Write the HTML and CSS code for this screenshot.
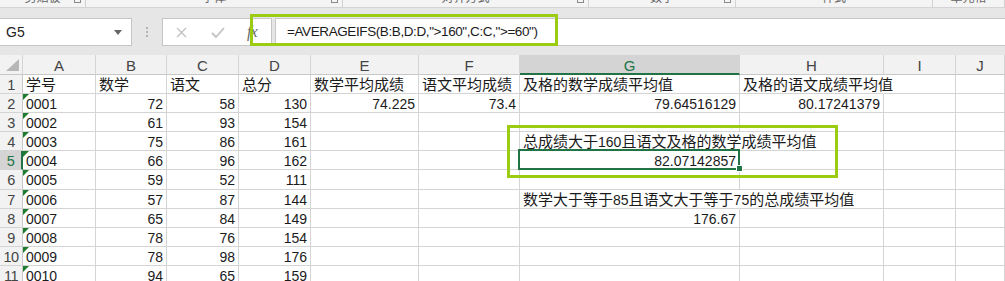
FILE: index.html
```html
<!DOCTYPE html>
<html lang="zh-CN">
<head>
  <meta charset="UTF-8" />
  <title>AVERAGEIFS</title>
  <link rel="stylesheet" href="styles.css">
</head>
<body>
<div class="app">

  <div class="ribbon-tail">
    <div class="grp"><span class="lbl">剪贴板</span><span class="launch"></span></div>
    <div class="grp"><span class="lbl">字体</span><span class="launch"></span></div>
    <div class="grp"><span class="lbl">对齐方式</span><span class="launch"></span></div>
    <div class="grp"><span class="lbl">数字</span><span class="launch"></span></div>
    <div class="grp"><span class="lbl">样式</span></div>
    <div class="grp"><span class="lbl">单元格</span></div>
  </div>

  <div class="fbar">
    <div class="namebox">
      <span>G5</span>
      <svg class="caret" width="8" height="5" viewBox="0 0 8 5"><path d="M0 0h8L4 5z" fill="#666"/></svg>
    </div>
    <svg class="grip" width="3" height="11" viewBox="0 0 3 11">
      <rect x="0" y="0" width="2" height="2" fill="#b5b5b5"/>
      <rect x="0" y="4" width="2" height="2" fill="#b5b5b5"/>
      <rect x="0" y="8" width="2" height="2" fill="#b5b5b5"/>
    </svg>
    <div class="fbtns">
      <svg class="btn-x" width="11" height="11" viewBox="0 0 11 11"><path d="M1 1l9 9M10 1l-9 9" stroke="#c2c2c2" stroke-width="1.4"/></svg>
      <svg class="btn-ok" width="14" height="11" viewBox="0 0 14 11"><path d="M1 6l4 4 8-9" stroke="#c2c2c2" stroke-width="1.8" fill="none"/></svg>
      <span class="fx">fx</span>
    </div>
    <div class="finput">=AVERAGEIFS(B:B,D:D,"&gt;160",C:C,"&gt;=60")</div>
  </div>

  <div class="sheet">
    <div class="hd corner"><svg width="13" height="12" viewBox="0 0 13 12"><path d="M13 0V12H0z" fill="#b7b7b7"/></svg></div>
    <div class="hd">A</div>
    <div class="hd">B</div>
    <div class="hd">C</div>
    <div class="hd">D</div>
    <div class="hd">E</div>
    <div class="hd">F</div>
    <div class="hd on-col">G</div>
    <div class="hd">H</div>
    <div class="hd">I</div>
    <div class="hd">J</div>

    <div class="rh">1</div>
    <div class="c">学号</div><div class="c">数学</div><div class="c">语文</div><div class="c">总分</div>
    <div class="c">数学平均成绩</div><div class="c">语文平均成绩</div><div class="c">及格的数学成绩平均值</div>
    <div class="c spill">及格的语文成绩平均值</div><div class="c"></div><div class="c"></div>

    <div class="rh">2</div>
    <div class="c t">0001</div><div class="c n">72</div><div class="c n">58</div><div class="c n">130</div>
    <div class="c n">74.225</div><div class="c n">73.4</div><div class="c n">79.64516129</div>
    <div class="c n">80.17241379</div><div class="c"></div><div class="c"></div>

    <div class="rh">3</div>
    <div class="c t">0002</div><div class="c n">61</div><div class="c n">93</div><div class="c n">154</div>
    <div class="c"></div><div class="c"></div><div class="c"></div><div class="c"></div><div class="c"></div><div class="c"></div>

    <div class="rh">4</div>
    <div class="c t">0003</div><div class="c n">75</div><div class="c n">86</div><div class="c n">161</div>
    <div class="c"></div><div class="c"></div><div class="c spill">总成绩大于<span class="d">160</span>且语文及格的数学成绩平均值</div>
    <div class="c"></div><div class="c"></div><div class="c"></div>

    <div class="rh on-row">5</div>
    <div class="c t">0004</div><div class="c n">66</div><div class="c n">96</div><div class="c n">162</div>
    <div class="c"></div><div class="c"></div><div class="c n sel">82.07142857<span class="handle"></span></div>
    <div class="c"></div><div class="c"></div><div class="c"></div>

    <div class="rh">6</div>
    <div class="c t">0005</div><div class="c n">59</div><div class="c n">52</div><div class="c n">111</div>
    <div class="c"></div><div class="c"></div><div class="c"></div><div class="c"></div><div class="c"></div><div class="c"></div>

    <div class="rh">7</div>
    <div class="c t">0006</div><div class="c n">57</div><div class="c n">87</div><div class="c n">144</div>
    <div class="c"></div><div class="c"></div><div class="c spill">数学大于等于<span class="d">85</span>且语文大于等于<span class="d">75</span>的总成绩平均值</div>
    <div class="c"></div><div class="c"></div><div class="c"></div>

    <div class="rh">8</div>
    <div class="c t">0007</div><div class="c n">65</div><div class="c n">84</div><div class="c n">149</div>
    <div class="c"></div><div class="c"></div><div class="c n">176.67</div>
    <div class="c"></div><div class="c"></div><div class="c"></div>

    <div class="rh">9</div>
    <div class="c t">0008</div><div class="c n">78</div><div class="c n">76</div><div class="c n">154</div>
    <div class="c"></div><div class="c"></div><div class="c"></div><div class="c"></div><div class="c"></div><div class="c"></div>

    <div class="rh">10</div>
    <div class="c t">0009</div><div class="c n">78</div><div class="c n">98</div><div class="c n">176</div>
    <div class="c"></div><div class="c"></div><div class="c"></div><div class="c"></div><div class="c"></div><div class="c"></div>

    <div class="rh">11</div>
    <div class="c t">0010</div><div class="c n">94</div><div class="c n">65</div><div class="c n">159</div>
    <div class="c"></div><div class="c"></div><div class="c"></div><div class="c"></div><div class="c"></div><div class="c"></div>
  </div>

  <!-- annotation boxes drawn over the screen -->
  <div class="mark mark-formula"></div>
  <div class="mark mark-cells"></div>
</div>
</body>
</html>
```

FILE: styles.css
```css
* { box-sizing: border-box; }

body {
  margin: 0;
  background: #fff;
  font-family: "Liberation Sans", "Noto Sans CJK SC", sans-serif;
  color: #1b1b1b;
  overflow: hidden;
}

.app {
  position: relative;
  width: 1005px;
  height: 281px;
  background: #e6e6e6;
  overflow: hidden;
}

/* bottom edge of the ribbon */
.ribbon-tail {
  display: grid;
  grid-template-columns: 86px 257px 246px 147px 197px 1fr;
  height: 8px;
  background: #f4f4f4;
  border-bottom: 1px solid #d4d4d4;
  overflow: hidden;
}

.grp {
  position: relative;
  display: flex;
  justify-content: center;
  border-right: 1px solid #d2d2d2;
  height: 7px;
}

.lbl {
  font-family: "Noto Sans CJK SC", sans-serif;
  font-size: 12px;
  line-height: 12px;
  margin-top: -9px;
  color: #666;
}

.launch {
  position: absolute;
  right: 4px;
  top: -4px;
  width: 7px;
  height: 7px;
  border: 1px solid #8a8a8a;
  border-top: none;
}

/* formula bar */
.fbar {
  display: flex;
  align-items: center;
  height: 28px;
  margin-top: 10px;
}

.namebox {
  display: flex;
  align-items: center;
  justify-content: space-between;
  width: 132px;
  height: 28px;
  background: #fff;
  border: 1px solid #c6c6c6;
  border-left: none;
  padding: 0 9px 0 6px;
  font-size: 14px;
  color: #222;
}

.grip {
  margin-left: 14px;
  margin-right: 13px;
}

.fbtns {
  display: flex;
  align-items: center;
  width: 110px;
  height: 28px;
  background: #fff;
  border: 1px solid #c6c6c6;
  padding-left: 13px;
}

.btn-x { margin-right: 24px; }
.btn-ok { margin-right: 22px; }

.fx {
  font-family: "Liberation Serif", serif;
  font-style: italic;
  font-size: 16px;
  color: #6a6a6a;
  letter-spacing: -1px;
}

.finput {
  flex: 1;
  height: 28px;
  margin-left: 3px;
  background: #fff;
  border: 1px solid #c6c6c6;
  border-right: none;
  padding-left: 11px;
  font-size: 13.5px;
  letter-spacing: -0.4px;
  line-height: 25px;
  color: #1b1b1b;
  white-space: nowrap;
}

/* sheet */
.sheet {
  display: grid;
  grid-template-columns: 23px 73px 71px 72px 72px 108px 101px 220px 144px 72px 1fr;
  grid-template-rows: 20px repeat(11, 19.1px);
  margin-top: 9px;
  background: #fff;
  font-size: 15px;
}

.hd {
  background: #f2f2f2;
  border-right: 1px solid #d4d4d4;
  border-bottom: 1px solid #c8c8c8;
  text-align: center;
  line-height: 21px;
  color: #444;
}

.corner {
  display: flex;
  align-items: flex-end;
  justify-content: flex-end;
  padding: 0 3px 3px 0;
}

.on-col {
  background: #d4d4d4;
  color: #217346;
  border-bottom: 2px solid #217346;
}

.rh {
  background: #f2f2f2;
  border-right: 1px solid #c8c8c8;
  border-bottom: 1px solid #d4d4d4;
  text-align: center;
  font-size: 14.5px;
  line-height: 19px;
  padding-top: 1px;
  color: #444;
  white-space: nowrap;
  letter-spacing: -0.5px;
}

.on-row {
  background: #d4d4d4;
  color: #217346;
  border-right: 2px solid #217346;
}

.c {
  position: relative;
  border-right: 1px solid #d4d4d4;
  border-bottom: 1px solid #d4d4d4;
  padding: 0 2px 0 3px;
  line-height: 19px;
  white-space: nowrap;
}

.c.n, .c.t, .d { font-size: 14px; }
.c.n, .c.t { padding-top: 1px; }

.c.n { text-align: right; padding-right: 3px; }

.c.spill { border-right-color: transparent; }

/* number stored as text marker */
.c.t::before {
  content: "";
  position: absolute;
  left: 0;
  top: 0;
  border-top: 6px solid #1e7b30;
  border-right: 6px solid transparent;
}

.c.sel::after {
  content: "";
  position: absolute;
  left: -2px;
  top: -2px;
  right: -1px;
  bottom: -1px;
  border: 2px solid #217346;
}

.handle {
  position: absolute;
  right: -4px;
  bottom: -3px;
  width: 7px;
  height: 7px;
  background: #217346;
  border: 1px solid #fff;
  z-index: 2;
}

/* green annotation boxes */
.mark {
  position: absolute;
  border: 3px solid #9bcc12;
}

.mark-formula {
  left: 250px;
  top: 14px;
  width: 308px;
  height: 32px;
}

.mark-cells {
  left: 507px;
  top: 125px;
  width: 331px;
  height: 53px;
}
```
